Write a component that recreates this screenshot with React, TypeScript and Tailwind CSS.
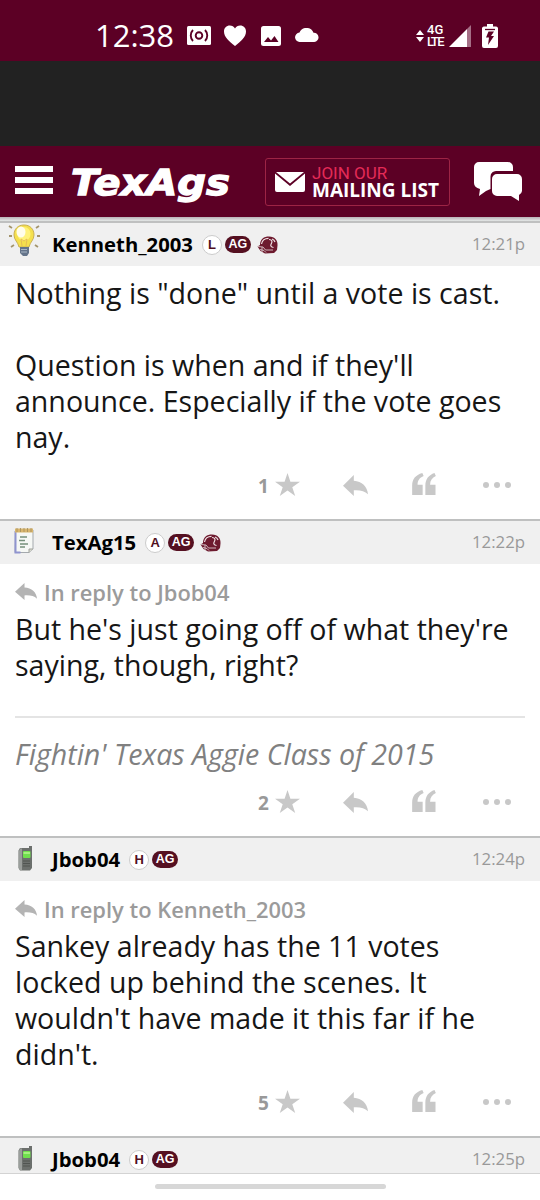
type PostIcon = 'bulb' | 'notepad' | 'phone';

interface Post {
  id: number;
  icon: PostIcon;
  author: string;
  initial: string;
  helmet?: boolean;
  time: string;
  replyTo?: string;
  lines: string[];
  signature?: string;
  stars: number;
  height: string;
}

const posts: Post[] = [
  {
    id: 1,
    icon: 'bulb',
    author: 'Kenneth_2003',
    initial: 'L',
    helmet: true,
    time: '12:21p',
    lines: ['Nothing is "done" until a vote is cast.', '', "Question is when and if they'll", 'announce. Especially if the vote goes', 'nay.'],
    stars: 1,
    height: 'h-[298px]',
  },
  {
    id: 2,
    icon: 'notepad',
    author: 'TexAg15',
    initial: 'A',
    helmet: true,
    time: '12:22p',
    replyTo: 'Jbob04',
    lines: ["But he's just going off of what they're", 'saying, though, right?'],
    signature: "Fightin' Texas Aggie Class of 2015",
    stars: 2,
    height: 'h-[317px]',
  },
  {
    id: 3,
    icon: 'phone',
    author: 'Jbob04',
    initial: 'H',
    time: '12:24p',
    replyTo: 'Kenneth_2003',
    lines: ['Sankey already has the 11 votes', 'locked up behind the scenes. It', "wouldn't have made it this far if he", "didn't."],
    stars: 5,
    height: 'h-[300px]',
  },
];

const lastPost = { icon: 'phone' as PostIcon, author: 'Jbob04', initial: 'H', time: '12:25p' };

const ReplyArrow = ({ className }: { className: string }) => (
  <svg viewBox="0 0 74 63" preserveAspectRatio="none" className={className} fill="currentColor">
    <path d="M0 32 32 0V17C56 19 72 34 74 58 64 48 52 45 32 46V63Z" />
  </svg>
);

const BulbIcon = () => (
  <svg viewBox="0 0 33 33" className="ml-2 h-[33px] w-[33px]">
    <g stroke="#a3946c" strokeWidth="1.8">
      <path d="M1 2l3 2M31 2l-3 2M1 12h3M29 12h3M3 23l3-2M30 23l-3-2" />
    </g>
    <path d="M16 1C10 1 6 5 6 11c0 5 4 7 5 12h10c1-5 5-7 5-12 0-6-4-10-10-10Z" fill="#f5e04d" stroke="#c9b052" />
    <ellipse cx="16" cy="10" rx="6.5" ry="7" fill="#fff27a" />
    <ellipse cx="13" cy="8" rx="4.5" ry="5.5" fill="#fffdeb" />
    <path d="M14 22l-1-7 3 2 3-2-1 7" fill="none" stroke="#e6bf55" />
    <path d="M12 23h9v6l-2 3h-4l-3-3Z" fill="#64748a" />
    <path d="M13 25.5h6M13 28h6" stroke="#a9b7c6" />
  </svg>
);

const NotepadIcon = () => (
  <svg viewBox="0 0 20 26" className="ml-[14px] h-[26px] w-5">
    <path d="M1.5 2H19v19l-4 3.5H1Z" fill="#f6f8f5" stroke="#a4a9ad" />
    <path d="M1.5 3v21.5h5" fill="none" stroke="#8f94cf" strokeWidth="2" />
    <path d="M15 24.5V21h4" fill="#d8d9cf" stroke="#a0a29b" />
    <path d="M1 2.5h18" stroke="#d9b66e" strokeWidth="4" />
    <path d="M3 0v4M6.5 0v4M10 0v4M13.5 0v4M17 0v4" stroke="#a38d5c" strokeWidth=".8" />
    <path d="M6 9h7M5 12.5h6M6 16h8M6 19h5" stroke="#75907b" strokeWidth="1.4" />
  </svg>
);

const PhoneIcon = () => (
  <svg viewBox="0 0 15 25" className="ml-[18px] h-[25px] w-[15px]">
    <path d="M11 0h3v22l-2 2.5H2L.5 22V4.5L2 2h9Z" fill="#6c706d" />
    <path d="M1 5l1-2.5h2V24H2L.8 22Z" fill="#9a9e9b" />
    <rect x="5" y="5" width="7.5" height="7" rx="1" fill="#6fe04d" />
    <path d="M5.5 6h6.5v2H5.5Z" fill="#a5f07f" />
    <path d="M5 15h7M5 17.5h7M5 20h7" stroke="#505451" strokeWidth="1.2" />
  </svg>
);

const HelmetIcon = () => (
  <svg viewBox="0 0 21 18" className="ml-[6px] h-[18px] w-[21px]">
    <path d="M3 9C3 3 7 .5 12 .5c6 0 9 4 8.5 9L20 14l-3 3-9 .5L3.5 15 .5 10.5Z" fill="#6d1a2e" />
    <path d="M4.5 8C5 4.5 8 2.3 11.5 2.3" fill="none" stroke="#f0e2e5" strokeWidth="1.2" />
    <path d="M12 3.5c3 0 3.5 2 2.5 3.8S13 11 16.5 11.5M15 3c1.5.5 2.5 1.5 3 3" fill="none" stroke="#f0e2e5" strokeWidth="1.2" />
    <path d="M.5 10.5 6 11l2.5 3H16M3 13.5l4 1 2 2M5 11v5" fill="none" stroke="#d9c5ca" strokeWidth=".9" />
  </svg>
);

const PostIconView = ({ icon }: { icon: PostIcon }) => {
  if (icon === 'bulb') return <BulbIcon />;
  if (icon === 'notepad') return <NotepadIcon />;
  return <PhoneIcon />;
};

interface PostHeaderProps {
  icon: PostIcon;
  author: string;
  initial: string;
  time: string;
  helmet?: boolean;
}

const PostHeader = ({ icon, author, initial, time, helmet }: PostHeaderProps) => (
  <div className="flex h-[43px] shrink-0 items-center bg-[#f0f0f0] pr-[15px]">
    <div className={`w-[52px] shrink-0 ${icon === 'bulb' ? '-mt-2' : icon === 'notepad' ? '-mt-1' : '-mt-0.5'}`}>
      <PostIconView icon={icon} />
    </div>
    <span className="text-[20.3px] leading-none font-bold text-black">{author}</span>
    <span className="ml-[9px] flex h-5 w-5 items-center justify-center rounded-full border border-[#ccc] bg-white font-['Liberation_Sans',sans-serif] text-[13px] leading-none font-bold text-[#500f1f]">
      {initial}
    </span>
    <span className="ml-[3px] flex h-[17px] w-[26px] items-center justify-center rounded-full bg-[#551021] font-['Liberation_Sans',sans-serif] text-[12.5px] leading-none font-bold text-white">
      AG
    </span>
    {helmet && <HelmetIcon />}
    <span className="ml-auto text-[16.8px] leading-none text-[#999]">{time}</span>
  </div>
);

const PostActions = ({ stars }: { stars: number }) => (
  <div className="mt-auto mb-[21px] flex h-[26px] shrink-0 items-center text-[#c8c8c8]">
    <span className="mt-[2px] ml-[258px] w-[17px] text-[19px] leading-none font-bold text-[#999]">{stars}</span>
    <svg viewBox="0 0 73 67" className="-mt-px h-[23px] w-[25px]" fill="currentColor">
      <path d="M36.5 0 45 25.5H73L50.5 41.5 59 67 36.5 51 14 67 22.5 41.5 0 25.5H28Z" />
    </svg>
    <ReplyArrow className="ml-[43px] h-[21px] w-[25px]" />
    <svg viewBox="0 0 70 65" className="-mt-[2px] ml-11 h-[22px] w-[24px]" fill="currentColor">
      <path d="M0 65V37C0 18 10 6 30 0l4 9C22 14 16 22 16 35H31V65ZM39 65V37C39 18 49 6 66 0l4 9C59 14 53 22 53 35H69V65Z" />
    </svg>
    <div className="-mt-px ml-[47px] flex gap-[5px]">
      <i className="h-[6px] w-[6px] rounded-full bg-current" />
      <i className="h-[6px] w-[6px] rounded-full bg-current" />
      <i className="h-[6px] w-[6px] rounded-full bg-current" />
    </div>
  </div>
);

const PostCard = ({ post }: { post: Post }) => (
  <article className={`flex flex-col border-t-2 border-[#bfc0c0] ${post.height}`}>
    <PostHeader icon={post.icon} author={post.author} initial={post.initial} time={post.time} helmet={post.helmet} />
    <div className="px-[15px] pt-[9px]">
      {post.replyTo && (
        <div className="mt-[2px] flex h-9 items-center gap-[7px] text-[21.9px] leading-none font-semibold text-[#9b9b9b]">
          <ReplyArrow className="-mt-[3px] h-[17px] w-[22px] text-[#b4b4b4]" />
          <span>In reply to {post.replyTo}</span>
        </div>
      )}
      {post.lines.map((line, i) => (
        <p key={i} className="h-9 text-[28.55px] leading-9 whitespace-nowrap text-[#161616]">
          {line}
        </p>
      ))}
    </div>
    {post.signature && (
      <div className="mx-[15px] mt-[33px] border-t-2 border-[#e4e4e4] pt-[18px] text-[28.6px] leading-9 whitespace-nowrap text-[#808080] italic">
        {post.signature}
      </div>
    )}
    <PostActions stars={post.stars} />
  </article>
);

const StatusBar = () => (
  <div className="flex h-[61px] shrink-0 items-center bg-[#5c0025] pt-[10px] text-white">
    <span className="-mt-px ml-[95px] w-[92px] text-[31px] leading-none font-normal">12:38</span>
    <svg viewBox="0 0 24 19" className="h-[19px] w-6">
      <rect width="24" height="19" rx="1.5" fill="white" />
      <g fill="none" stroke="#5c0025" strokeWidth="1.9">
        <circle cx="12" cy="9.5" r="3.3" />
        <path d="M6 4c-3 3-3 8 0 11M18 4c3 3 3 8 0 11" />
      </g>
    </svg>
    <svg viewBox="0 0 22 21" className="ml-[13px] h-[21px] w-[22px]" fill="white">
      <path d="M11 21C5 16 0 12 0 6.5 0 3 2.5.5 5.8.5 8 .5 10 1.7 11 3.5 12 1.7 14 .5 16.2.5 19.5.5 22 3 22 6.5 22 12 17 16 11 21Z" />
    </svg>
    <svg viewBox="0 0 20 20" className="ml-[15px] h-5 w-5">
      <rect width="20" height="20" rx="2.5" fill="white" />
      <path d="M3 16l4-5 3 3.5 3.5-4.5 4 6Z" fill="#5c0025" />
    </svg>
    <svg viewBox="0 0 24 14" className="-mt-px ml-[14px] h-[14px] w-6" fill="white">
      <path d="M5 14a4.7 4.7 0 0 1-.5-9.4A7.5 7.5 0 0 1 18.5 4.8 4.6 4.6 0 0 1 19.3 14Z" />
    </svg>
    <svg viewBox="0 0 8 12" className="ml-[97px] h-3 w-2" fill="white">
      <path d="M0 5 4 0 8 5ZM0 7 4 12 8 7Z" />
    </svg>
    <div className="ml-[3px] w-[20px] font-['Roboto',sans-serif] text-[13px] leading-[12px] font-medium">
      <div>4G</div>
      <div className="tracking-[-1.6px]">LTE</div>
    </div>
    <svg viewBox="0 0 22 22" className="ml-[2px] h-[22px] w-[22px]">
      <path d="M0 22 18 4v18Z" fill="white" />
      <path d="M18 4 22 0v22h-4Z" fill="#a56f86" />
    </svg>
    <svg viewBox="0 0 16 24" className="ml-[11px] h-6 w-4">
      <path d="M5 0h6v2.5h3A2 2 0 0 1 16 4v18a2 2 0 0 1-2 2H2a2 2 0 0 1-2-2V4a2 2 0 0 1 2-1.5h3Z" fill="white" />
      <path d="M3 5.5h10" stroke="#5c0025" strokeWidth="1.3" />
      <path d="M6.5 7.5 4 13.5h3L6 21l6-9H9l3-4.5Z" fill="#5c0025" />
    </svg>
  </div>
);

const SiteHeader = () => (
  <header className="flex h-[71px] shrink-0 items-center bg-[#5c0025]">
    <div className="-mt-[3px] ml-[15px] flex w-[38px] flex-col gap-[5px]">
      <i className="h-[6px] bg-white" />
      <i className="h-[6px] bg-white" />
      <i className="h-[6px] bg-white" />
    </div>
    <svg viewBox="0 0 164 44" className="ml-[17px] h-[44px] w-[164px]">
      <text
        x="1"
        y="34.5"
        textLength="159"
        lengthAdjust="spacingAndGlyphs"
        fill="white"
        stroke="white"
        strokeWidth="1.3"
        className="font-['DejaVu_Sans',sans-serif] text-[35px] font-bold italic"
      >
        TexAgs
      </text>
    </svg>
    <div className="ml-[31px] flex h-12 w-[185px] items-center rounded-[3px] border-[1.5px] border-[#9d2445] pl-[9px]">
      <svg viewBox="0 0 30 20" className="h-5 w-[30px]">
        <path d="M0 1.5 15 14 30 1.5V18a2 2 0 0 1-2 2H2a2 2 0 0 1-2-2Z" fill="white" />
        <path d="M1 0H29L15 11.5Z" fill="white" />
      </svg>
      <div className="ml-[7px] whitespace-nowrap">
        <div className="font-['Roboto',sans-serif] text-[17px] leading-[17px] text-[#e42b57]">JOIN OUR</div>
        <div className="text-[19px] leading-[17px] font-bold text-white">MAILING LIST</div>
      </div>
    </div>
    <svg viewBox="0 0 48 40" className="ml-6 h-10 w-12" fill="white">
      <path d="M5 0H34a5 5 0 0 1 5 5V9H22a5.5 5.5 0 0 0-5.5 5.5V27L12 29 5 34 6 27C2 26 0 24 0 21V5A5 5 0 0 1 5 0Z" />
      <path d="M23 12H43a5 5 0 0 1 5 5V29a5 5 0 0 1-3 4V39L37 34H23a5 5 0 0 1-5-5V17A5 5 0 0 1 23 12Z" />
    </svg>
  </header>
);

export default function App() {
  return (
    <div className="flex h-[1200px] w-[540px] flex-col overflow-hidden bg-white font-['Open_Sans','Noto_Sans',sans-serif]">
      <StatusBar />
      <div className="h-[85px] shrink-0 bg-[#222]" />
      <SiteHeader />
      <div className="h-1 shrink-0 bg-linear-to-b from-[#b9b2b7] to-[#e4e8e7]" />
      {posts.map((post) => (
        <PostCard key={post.id} post={post} />
      ))}
      <div className="h-[38px] shrink-0 overflow-hidden border-t-2 border-b border-t-[#bfc0c0] border-b-[#d3d3d3]">
        <PostHeader {...lastPost} />
      </div>
      <div className="mx-auto mt-[10px] h-[5px] w-[231px] rounded-full bg-[#d7d7d7]" />
    </div>
  );
}
